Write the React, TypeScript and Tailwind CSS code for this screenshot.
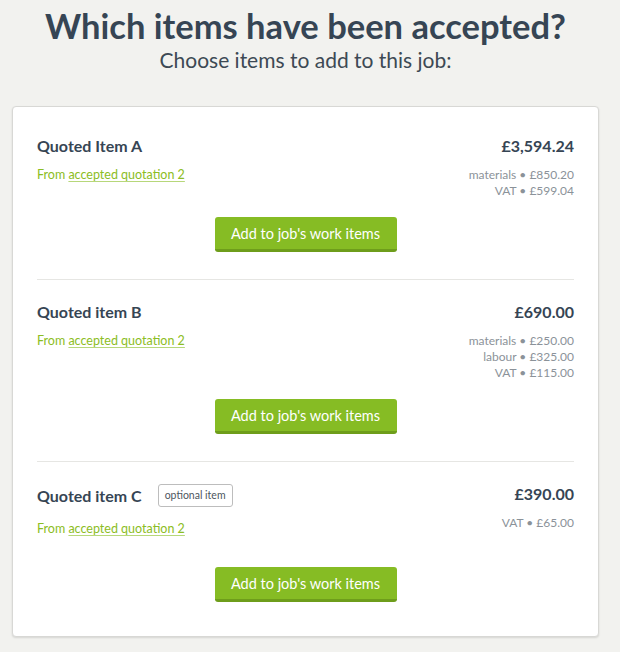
import React from 'react';

type Item = {
  name: string;
  price: string;
  optional?: boolean;
  breakdown: string[];
};

const items: Item[] = [
  { name: 'Quoted Item A', price: '£3,594.24', breakdown: ['materials • £850.20', 'VAT • £599.04'] },
  {
    name: 'Quoted item B',
    price: '£690.00',
    breakdown: ['materials • £250.00', 'labour • £325.00', 'VAT • £115.00'],
  },
  { name: 'Quoted item C', price: '£390.00', optional: true, breakdown: ['VAT • £65.00'] },
];

function QuotedItem({ item, last }: { item: Item; last: boolean }) {
  return (
    <div className={`pt-[22px] pb-[27px] ${last ? '' : 'border-b border-[#e6e6e3]'}`}>
      <div className="flex justify-between">
        {/* Left column */}
        <div className="pb-[30px]">
          <div className="flex items-center gap-4 min-h-[20px]">
            <span className="text-[16px] leading-[20px] font-bold text-[#364554]">{item.name}</span>
            {item.optional && (
              <span className="border border-[#bdbdbd] rounded-[3px] px-[6px] h-[23px] flex items-center text-[10.5px] text-[#4d5660]">
                optional item
              </span>
            )}
          </div>
          <p className={`${item.optional ? 'mt-[14px]' : 'mt-[11px]'} text-[12.5px] leading-[16px] text-[#8cbd24]`}>
            From{' '}
            <a href="#" className="underline decoration-[#b7d77a] underline-offset-2">
              accepted quotation 2
            </a>
          </p>
        </div>

        {/* Right column */}
        <div className="text-right pb-[18px]">
          <p className="text-[16px] leading-[20px] font-bold text-[#364554]">{item.price}</p>
          <div className="mt-[11px] text-[12px] leading-[16px] text-[#8b9299]">
            {item.breakdown.map((b) => (
              <p key={b}>{b}</p>
            ))}
          </div>
        </div>
      </div>

      <div className="flex justify-center">
        <button className="w-[182px] h-[35px] bg-[#86bc24] border-b-[3px] border-[#6e9d1b] rounded-[3px] text-white text-[14.5px] pt-[2px]">
          Add to job's work items
        </button>
      </div>
    </div>
  );
}

export default function App() {
  return (
    <main className="min-h-screen bg-[#f2f2ef] pl-[12px] pr-[21px] pb-[14px]" style={{ fontFamily: 'Lato, "Open Sans", sans-serif' }}>
      <div className="text-center pt-[6px]">
        <h1 className="text-[34.5px] leading-[40px] font-bold text-[#364554]">Which items have been accepted?</h1>
        <p className="text-[21px] leading-[24px] text-[#3d4954] mt-[2px]">Choose items to add to this job:</p>
      </div>

      <div className="mt-[34px] bg-white border border-[#d8d8d5] rounded-[4px] shadow-[0_1px_2px_rgba(0,0,0,0.12)] px-[24px] py-[7px]">
        {items.map((item, i) => (
          <QuotedItem key={item.name} item={item} last={i === items.length - 1} />
        ))}
      </div>
    </main>
  );
}
